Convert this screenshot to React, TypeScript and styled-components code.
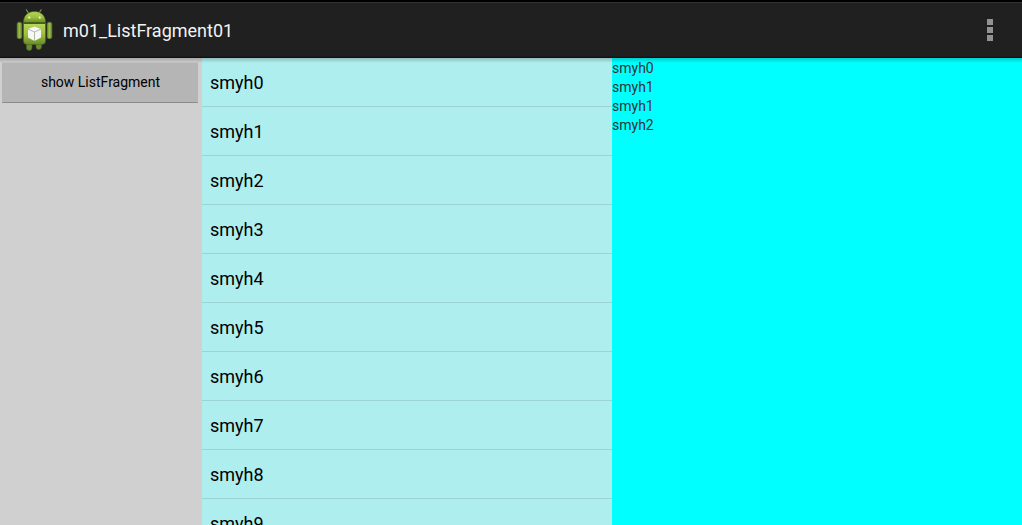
import React from 'react';
import styled, { createGlobalStyle } from 'styled-components';

const GlobalStyle = createGlobalStyle`
  * { box-sizing: border-box; }
  body {
    margin: 0;
    font-family: Roboto, "Liberation Sans", sans-serif;
    color: #000;
  }
`;

const Screen = styled.div`
  display: flex;
  flex-direction: column;
  height: 100vh;
  overflow: hidden;
`;

const ActionBar = styled.header`
  display: flex;
  align-items: center;
  flex: none;
  height: 58px;
  padding: 0 14px;
  border-top: 2px solid #000;
  background: linear-gradient(#333 1px, #202020 1px, #202020 54px, #0c0c0c);
`;

const AppIcon = styled.svg`
  flex: none;
  width: 40px;
  height: 44px;
`;

const Title = styled.h1`
  flex: 1;
  margin: 0 0 0 9px;
  padding-top: 2px;
  font-size: 18px;
  line-height: 24px;
  font-weight: 400;
  color: #f3f3f3;
`;

const OverflowButton = styled.button`
  display: flex;
  flex-direction: column;
  align-items: center;
  justify-content: center;
  gap: 2px;
  width: 36px;
  height: 48px;
  padding: 0;
  border: 0;
  background: transparent;
`;

const Dot = styled.span`
  width: 6px;
  height: 6px;
  background: #929292;
`;

const Panes = styled.main`
  display: grid;
  grid-template-columns: 202px 1fr 1fr;
  flex: 1;
  min-height: 0;
`;

const Pane = styled.section<{ $color: string }>`
  min-width: 0;
  overflow: hidden;
  background: linear-gradient(rgba(0, 0, 0, 0.2), transparent 5px) ${({ $color }) => $color};
`;

const ShowButton = styled.button`
  display: block;
  width: calc(100% - 6px);
  height: 40px;
  margin: 5px 4px 0 2px;
  padding: 0 0 2px 1px;
  border: 0;
  border-bottom: 1px solid #8a8a8a;
  border-radius: 1px;
  background: #b5b5b5;
  box-shadow: 0 -1px 0 #c2c2c2;
  font: 14px/20px Roboto, "Liberation Sans", sans-serif;
  color: #000;
`;

const List = styled.ul`
  margin: 0;
  padding: 0;
  list-style: none;
`;

const ListRow = styled.li`
  height: 49px;
  padding: 0 8px;
  border-bottom: 1px solid #9cd4d4;
  font-size: 18px;
  line-height: 49px;
`;

const LogLine = styled.p`
  margin: 0;
  font-size: 14px;
  line-height: 19px;
  color: #333;
`;

const Log = styled.div`
  padding-top: 1px;
`;

const items = Array.from({ length: 10 }, (_, i) => `smyh${i}`);
const log = ['smyh0', 'smyh1', 'smyh1', 'smyh2'];

function Robot() {
  return (
    <AppIcon viewBox="0 0 40 44" aria-hidden="true">
      <defs>
        <linearGradient id="skin" x1="0" y1="0" x2="0" y2="1">
          <stop offset="0" stopColor="#b5d455" />
          <stop offset="0.5" stopColor="#9fc240" />
          <stop offset="1" stopColor="#6a8c26" />
        </linearGradient>
        <linearGradient id="limb" x1="0" y1="0" x2="1" y2="0">
          <stop offset="0" stopColor="#6f9030" />
          <stop offset="0.5" stopColor="#9abb48" />
          <stop offset="1" stopColor="#6a8a2c" />
        </linearGradient>
      </defs>
      <path d="M12.3 1.8l2.4 3.6M27.2 1.8l-2.4 3.6" stroke="#829f45" strokeWidth="1.1" strokeLinecap="round" />
      <g stroke="#4c6622" strokeWidth="0.6">
        <path d="M12.5 34h5.5v5.5q0 3-2.8 3t-2.7-3z" fill="#6a8a34" />
        <path d="M22 34h5.5v4.5q0 3-2.7 3t-2.8-3z" fill="#6a8a34" />
        <rect x="3" y="14.2" width="5" height="16.5" rx="1.8" fill="url(#limb)" />
        <rect x="33" y="14.2" width="5" height="16.5" rx="1.8" fill="url(#limb)" />
        <path d="M9.5 15h22v18q0 3.5-4 3.5h-14q-4 0-4-3.5z" fill="url(#skin)" />
        <path d="M9.5 14.5C9.5 7.5 14 3.5 20.5 3.5S31.5 7.5 31.5 14.5z" fill="url(#skin)" />
      </g>
      <path d="M9.5 15.4h22" stroke="#41591f" strokeWidth="1.1" />
      <path d="M10.5 17h20" stroke="#bddb61" strokeWidth="0.8" />
      <circle cx="15.3" cy="9.5" r="1.1" fill="#f4ffdc" />
      <circle cx="25.7" cy="9.5" r="1.1" fill="#f4ffdc" />
      <path d="M20.5 18.5l6.5 2.5v8.5l-6.5 3.5-6.5-3.5V21z" fill="#f7f8f3" />
      <path d="M14 21l6.5 3 6.5-3M20.5 24v9" fill="none" stroke="#a9b39b" strokeWidth="0.9" />
    </AppIcon>
  );
}

export default function App() {
  return (
    <Screen>
      <GlobalStyle />
      <ActionBar>
        <Robot />
        <Title>m01_ListFragment01</Title>
        <OverflowButton type="button" aria-label="More options">
          <Dot />
          <Dot />
          <Dot />
        </OverflowButton>
      </ActionBar>
      <Panes>
        <Pane $color="#d0d0d0">
          <ShowButton type="button">show ListFragment</ShowButton>
        </Pane>
        <Pane $color="#afeeee">
          <List>
            {items.map((item) => (
              <ListRow key={item}>{item}</ListRow>
            ))}
          </List>
        </Pane>
        <Pane $color="#00ffff">
          <Log>
            {log.map((line, i) => (
              <LogLine key={i}>{line}</LogLine>
            ))}
          </Log>
        </Pane>
      </Panes>
    </Screen>
  );
}
